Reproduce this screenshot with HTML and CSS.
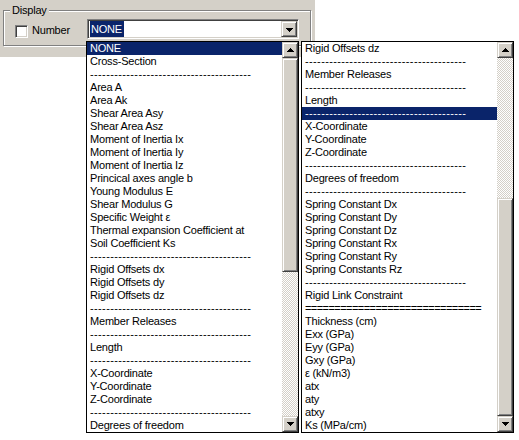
FILE: index.html
```html
<!DOCTYPE html>
<html>
<head>
<meta charset="utf-8">
<link rel="stylesheet" href="styles.css">
</head>
<body>
<div class="panel">
  <div class="group">
    <span class="legend">Display</span>
    <div class="row">
      <span class="check"></span>
      <span class="lbl">Number</span>
      <div class="combo">
        <span class="val"><span class="sel">NONE</span></span>
        <span class="btn"><svg width="7" height="4" viewBox="0 0 7 4" shape-rendering="crispEdges"><polygon points="0,0 7,0 7,1 6,1 6,2 5,2 5,3 4,3 4,4 3,4 3,3 2,3 2,2 1,2 1,1 0,1" fill="#000"/></svg></span>
      </div>
    </div>
  </div>
</div>

<div class="list list-left">
  <ul class="items">
    <li class="hl">NONE</li>
    <li>Cross-Section</li>
    <li class="sep">----------------------------------------</li>
    <li>Area A</li>
    <li>Area Ak</li>
    <li>Shear Area Asy</li>
    <li>Shear Area Asz</li>
    <li>Moment of Inertia Ix</li>
    <li>Moment of Inertia Iy</li>
    <li>Moment of Inertia Iz</li>
    <li>Princical axes angle b</li>
    <li>Young Modulus E</li>
    <li>Shear Modulus G</li>
    <li>Specific Weight ε</li>
    <li>Thermal expansion Coefficient at</li>
    <li>Soil Coefficient Ks</li>
    <li class="sep">----------------------------------------</li>
    <li>Rigid Offsets dx</li>
    <li>Rigid Offsets dy</li>
    <li>Rigid Offsets dz</li>
    <li class="sep">----------------------------------------</li>
    <li>Member Releases</li>
    <li class="sep">----------------------------------------</li>
    <li>Length</li>
    <li class="sep">----------------------------------------</li>
    <li>X-Coordinate</li>
    <li>Y-Coordinate</li>
    <li>Z-Coordinate</li>
    <li class="sep">----------------------------------------</li>
    <li>Degrees of freedom</li>
  </ul>
  <div class="sb">
    <span class="btn"><svg width="7" height="4" viewBox="0 0 7 4" shape-rendering="crispEdges"><polygon points="3,0 4,0 4,1 5,1 5,2 6,2 6,3 7,3 7,4 0,4 0,3 1,3 1,2 2,2 2,1 3,1" fill="#000"/></svg></span>
    <span class="thumb thumb-left"></span>
    <span class="track track-fill"></span>
    <span class="btn"><svg width="7" height="4" viewBox="0 0 7 4" shape-rendering="crispEdges"><polygon points="0,0 7,0 7,1 6,1 6,2 5,2 5,3 4,3 4,4 3,4 3,3 2,3 2,2 1,2 1,1 0,1" fill="#000"/></svg></span>
  </div>
</div>

<div class="list list-right">
  <ul class="items">
    <li>Rigid Offsets dz</li>
    <li class="sep">----------------------------------------</li>
    <li>Member Releases</li>
    <li class="sep">----------------------------------------</li>
    <li>Length</li>
    <li class="sep hl">----------------------------------------</li>
    <li>X-Coordinate</li>
    <li>Y-Coordinate</li>
    <li>Z-Coordinate</li>
    <li class="sep">----------------------------------------</li>
    <li>Degrees of freedom</li>
    <li class="sep">----------------------------------------</li>
    <li>Spring Constant Dx</li>
    <li>Spring Constant Dy</li>
    <li>Spring Constant Dz</li>
    <li>Spring Constant Rx</li>
    <li>Spring Constant Ry</li>
    <li>Spring Constants Rz</li>
    <li class="sep">----------------------------------------</li>
    <li>Rigid Link Constraint</li>
    <li class="eq">==============================</li>
    <li>Thickness (cm)</li>
    <li>Exx (GPa)</li>
    <li>Eyy (GPa)</li>
    <li>Gxy (GPa)</li>
    <li>ε (kN/m3)</li>
    <li>atx</li>
    <li>aty</li>
    <li>atxy</li>
    <li>Ks (MPa/cm)</li>
  </ul>
  <div class="sb">
    <span class="btn"><svg width="7" height="4" viewBox="0 0 7 4" shape-rendering="crispEdges"><polygon points="3,0 4,0 4,1 5,1 5,2 6,2 6,3 7,3 7,4 0,4 0,3 1,3 1,2 2,2 2,1 3,1" fill="#000"/></svg></span>
    <span class="track track-right"></span>
    <span class="thumb thumb-fill"></span>
    <span class="btn"><svg width="7" height="4" viewBox="0 0 7 4" shape-rendering="crispEdges"><polygon points="0,0 7,0 7,1 6,1 6,2 5,2 5,3 4,3 4,4 3,4 3,3 2,3 2,2 1,2 1,1 0,1" fill="#000"/></svg></span>
  </div>
</div>
</body>
</html>
```
FILE: styles.css
```css
* { box-sizing: border-box; }
html, body { margin: 0; padding: 0; background: #fff; }
body {
  position: relative;
  width: 519px;
  height: 440px;
  overflow: hidden;
  font-family: "Liberation Sans", Arial, sans-serif;
  font-size: 11px;
  letter-spacing: -0.2px;
  color: #000;
}

.panel {
  width: 315px;
  height: 57px;
  background: #d4d0c8;
  padding: 10px 0 0 3px;
}

.group {
  width: 308px;
  height: 36px;
  border: 1px solid #808080;
  box-shadow: inset 1px 1px 0 #fff, 1px 1px 0 #fff;
  padding: 0 11px;
}

.legend {
  display: block;
  width: max-content;
  margin: -7px 0 0 -5px;
  padding: 0 2px 0 2px;
  line-height: 13px;
  background: #d4d0c8;
}

.row {
  display: flex;
  align-items: flex-start;
  margin-top: 2px;
}

.check {
  width: 13px;
  height: 13px;
  margin-top: 6px;
  background: #fff;
  border: 1px solid;
  border-color: #808080 #fff #fff #808080;
  box-shadow: inset 1px 1px 0 #404040, inset -1px -1px 0 #d4d0c8;
}

.lbl {
  margin: 5px 0 0 4px;
  line-height: 13px;
}

.combo {
  margin-left: auto;
  width: 212px;
  height: 20px;
  display: flex;
  background: #fff;
  border: 1px solid;
  border-color: #808080 #fff #fff #808080;
  box-shadow: inset 1px 1px 0 #404040, inset -1px -1px 0 #d4d0c8;
  padding: 1px;
}

.val {
  flex: 1;
  padding: 0 0 0 1px;
}

.sel {
  display: inline-block;
  background: #0a246a;
  color: #fff;
  line-height: 16px;
  padding: 0 2px 0 1px;
}

.btn {
  width: 16px;
  height: 16px;
  flex: none;
  display: flex;
  align-items: center;
  justify-content: center;
  background: #d4d0c8;
  border: 1px solid;
  border-color: #d4d0c8 #404040 #404040 #d4d0c8;
  box-shadow: inset 1px 1px 0 #fff, inset -1px -1px 0 #808080;
}

.combo .btn svg { margin-top: 1px; }

.list {
  position: absolute;
  top: 41px;
  width: 213px;
  height: 392px;
  background: #fff;
  border: 1px solid #000;
  display: flex;
}
.list-left { left: 86px; }
.list-right { left: 301px; }

.items {
  flex: 1;
  margin: 0;
  padding: 0;
  list-style: none;
  overflow: hidden;
}
.items li {
  height: 13px;
  line-height: 13px;
  padding-left: 3px;
  white-space: nowrap;
}
.items li.sep { letter-spacing: 0.37px; }
.items li.eq { letter-spacing: -0.55px; }
.items li.hl { background: #0a246a; color: #fff; }

.sb {
  width: 16px;
  display: flex;
  flex-direction: column;
}

.sb .btn svg { display: block; }

.thumb {
  display: block;
  background: #d4d0c8;
  border: 1px solid;
  border-color: #d4d0c8 #404040 #404040 #d4d0c8;
  box-shadow: inset 1px 1px 0 #fff, inset -1px -1px 0 #808080;
}
.track {
  display: block;
  background: repeating-conic-gradient(#d4d0c8 0 25%, #fff 0 50%) 0 0 / 2px 2px;
}
.thumb-left { height: 214px; }
.track-right { height: 140px; }
.track-fill, .thumb-fill { flex: 1; }
```
